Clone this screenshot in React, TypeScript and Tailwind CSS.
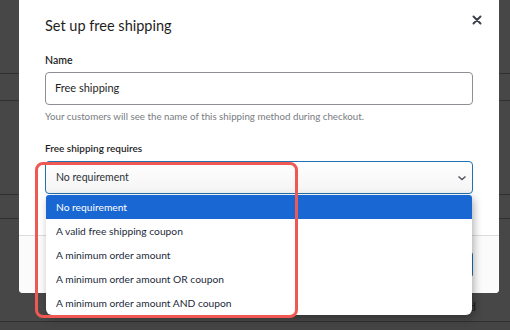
import React from "react";

const options = [
  "No requirement",
  "A valid free shipping coupon",
  "A minimum order amount",
  "A minimum order amount OR coupon",
  "A minimum order amount AND coupon",
];

export default function App() {
  return (
    <div className="relative w-[510px] h-[330px] overflow-hidden bg-[#474747] font-['Lato','Open_Sans',sans-serif]">
      {/* page behind the overlay */}
      <div className="flex flex-col h-full">
        <div className="h-[74px] border-b border-[#303030]" />
        <div className="h-[27px] border-b border-[#303030]" />
        <div className="h-[94px] border-b border-[#303030]" />
        <div className="h-[24px] border-b border-[#303030]" />
        <div className="h-[103px] border-b border-[#303030] flex items-end justify-end pr-[34px] pb-[5px]">
          <span className="text-[12px] text-[#1c1c1c]">Enabled</span>
        </div>
        <div className="flex-1 bg-[#444444]" />
      </div>

      {/* modal */}
      <div className="absolute left-[19px] top-0 w-[480px] h-[293px] bg-white rounded-b-[4px] flex flex-col">
        <div className="h-[52px] flex justify-between pl-[26px] pr-[17px]">
          <h1 className="self-center text-[14.5px] leading-[24px] text-[#1e1e1e] font-normal">Set up free shipping</h1>
          <svg width="10" height="10" viewBox="0 0 10 10" className="mt-[15px]">
            <path d="M1.5 1.5 L8.5 8.5 M8.5 1.5 L1.5 8.5" stroke="#3c434a" strokeWidth="2" strokeLinecap="round" />
          </svg>
        </div>
        <div className="flex flex-col px-[26px]">
          <label className="text-[10.5px] leading-[16px] font-semibold text-[#1e1e1e]">Name</label>
          <div className="mt-[4px] h-[33px] border border-[#8c8f94] rounded-[4px] pl-[9px] flex items-center text-[11px] text-[#1e1e1e]">
            Free shipping
          </div>
          <p className="mt-[3px] text-[9.75px] leading-[16px] text-[#787c82]">
            Your customers will see the name of this shipping method during checkout.
          </p>
          <label className="mt-[16px] text-[10px] leading-[16px] font-semibold text-[#1e1e1e]">Free shipping requires</label>
          <div className="mt-[5px] h-[33px] border border-[#2271b1] rounded-[4px] pl-[10px] pr-[5px] flex items-center justify-between text-[10.5px] text-[#2c3338] bg-gradient-to-b from-white to-[#f4f4f4]">
            <span>No requirement</span>
            <svg width="10" height="10" viewBox="0 0 10 10">
              <path d="M1.5 3.5 L5 6.5 L8.5 3.5" fill="none" stroke="#50575e" strokeWidth="1.5" />
            </svg>
          </div>
        </div>
        <div className="flex-1" />
        <div className="h-[58px] border-t border-[#dcdcde] bg-[#fbfbfb] rounded-b-[4px] flex items-center justify-end px-[26px]">
          <button className="h-[25px] px-[14px] rounded-[3px] bg-[#2271b1] text-white text-[11px]">Create</button>
        </div>
      </div>

      {/* native dropdown */}
      <div className="absolute left-[46px] top-[195px] w-[426px] bg-white rounded-t-[3px] rounded-b-[6px] overflow-hidden shadow-[2px_3px_8px_rgba(0,0,0,0.3)] flex flex-col">
        {options.map((o, i) => (
          <div
            key={o}
            className={
              i === 0
                ? "h-[24px] pl-[10px] pt-[1px] flex items-center text-[10.25px] bg-[#1967d2] text-white"
                : "h-[24px] pl-[10px] pt-[1px] flex items-center text-[10.25px] text-[#1d2a3a]"
            }
          >
            {o}
          </div>
        ))}
      </div>

      {/* annotation */}
      <div className="absolute left-[35px] top-[162px] w-[263px] h-[156px] border-[3px] border-[#ee5953] rounded-[8px]" />
    </div>
  );
}
